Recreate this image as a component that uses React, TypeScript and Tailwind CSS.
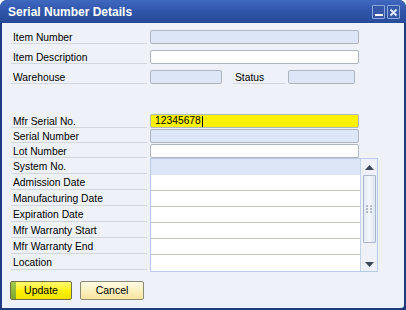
import React from "react";

const font = "font-['Liberation_Sans',Arial,sans-serif]";

function Label({ text, w = "w-[136px]", h = "h-[14px]" }: { text: string; w?: string; h?: string }) {
  return (
    <div className={`${w} ${h} mr-[3px] border-b border-[#d2d7df] pl-[2px] pt-[1px] flex items-center text-[10.3px] leading-[13px] text-black`}>
      {text}
    </div>
  );
}

function Input({ w = "w-[209px]", bg = "bg-[#dde6f6]", children }: { w?: string; bg?: string; children?: React.ReactNode }) {
  return (
    <div className={`${w} h-[14px] border border-[#b0b6c0] rounded-[2px] ${bg} flex items-center pl-[4px] text-[10.3px] leading-[12px] text-black`}>
      {children}
    </div>
  );
}

export default function App() {
  const gridLabels = [
    "System No.",
    "Admission Date",
    "Manufacturing Date",
    "Expiration Date",
    "Mfr Warranty Start",
    "Mfr Warranty End",
    "Location",
  ];
  return (
    <div className={`w-[406px] h-[310px] bg-white ${font}`}>
      <div className="w-[406px] h-[310px] flex flex-col bg-[#1f3c80] rounded-t-[7px] overflow-hidden">
        {/* Title bar */}
        <div className="h-[23px] flex items-center px-[8px] bg-gradient-to-b from-[#3f68c0] via-[#2f56aa] to-[#274a98]">
          <div className="text-white font-bold text-[12px] leading-[16px] mt-[1px] flex-1">Serial Number Details</div>
          <div className="flex gap-[2px] mt-[1px] mr-[-2px]">
            <div className="w-[13px] h-[14px] border border-[#8fa8dc] rounded-[1px] bg-[#3559a8] flex items-end justify-center pb-[2px]">
              <div className="w-[8px] h-[2px] bg-white" />
            </div>
            <div className="w-[13px] h-[14px] border border-[#8fa8dc] rounded-[1px] bg-[#3559a8] flex items-center justify-center">
              <svg width="9" height="9" viewBox="0 0 9 9">
                <path d="M1.5 1.5 L7.5 7.5 M7.5 1.5 L1.5 7.5" stroke="#dfe8ff" strokeWidth="2" />
              </svg>
            </div>
          </div>
        </div>
        {/* Body */}
        <div className="flex-1 ml-[2px] mr-[2px] mb-[2px] bg-[#eef2f8] rounded-br-[3px] pl-[9px] pt-[4px] flex flex-col">
          <div className="h-[20px] flex items-center">
            <Label text="Item Number" />
            <Input />
          </div>
          <div className="h-[20px] flex items-center">
            <Label text="Item Description" />
            <Input bg="bg-white" />
          </div>
          <div className="h-[20px] flex items-center">
            <Label text="Warehouse" />
            <Input w="w-[72px]" />
            <div className="ml-[11px]">
              <Label text="Status" w="w-[52px]" />
            </div>
            <Input w="w-[67px]" />
          </div>
          <div className="h-[27px]" />
          <div className="h-[15px] flex items-start">
            <Label text="Mfr Serial No." />
            <Input bg="bg-[#fff200]">
              <span>12345678</span>
              <span className="w-[1px] h-[11px] bg-black ml-[1px]" />
            </Input>
          </div>
          <div className="h-[15px] flex items-start">
            <Label text="Serial Number" />
            <Input />
          </div>
          <div className="h-[15px] flex items-start">
            <Label text="Lot Number" />
            <Input bg="bg-white" />
          </div>
          <div className="flex mt-[-1px]">
            <div className="flex flex-col">
              {gridLabels.map((l) => (
                <Label key={l} text={l} h="h-[16px]" />
              ))}
            </div>
            <div className="w-[228px] h-[114px] border border-[#b7cae8] flex bg-white">
              <div className="w-[209px] flex flex-col">
                {gridLabels.map((l, i) => (
                  <div
                    key={l}
                    className={`h-[16px] ${i === 0 ? "bg-[#dde6f6]" : "bg-white"} ${i >= 1 && i <= 5 ? "border-b border-[#c6c6be]" : ""}`}
                  />
                ))}
              </div>
              <div className="w-[17px] border-l border-[#c4d3ea] bg-[#eef2f8] flex flex-col items-center">
                <div className="h-[15px] flex items-center justify-center mt-[1px]">
                  <svg width="9" height="5" viewBox="0 0 9 5">
                    <path d="M0 5 L4.5 0 L9 5 Z" fill="#3c4656" />
                  </svg>
                </div>
                <div className="w-[13px] h-[68px] border border-[#a9b6cc] rounded-[1px] bg-gradient-to-r from-[#e4ebf6] via-[#f4f7fc] to-[#dce4f2] flex items-center justify-center">
                  <svg width="6" height="8" viewBox="0 0 6 8">
                    <g fill="#b3bccb">
                      <rect x="0" y="0" width="2" height="2" />
                      <rect x="4" y="0" width="2" height="2" />
                      <rect x="0" y="3" width="2" height="2" />
                      <rect x="4" y="3" width="2" height="2" />
                      <rect x="0" y="6" width="2" height="2" />
                      <rect x="4" y="6" width="2" height="2" />
                    </g>
                  </svg>
                </div>
                <div className="flex-1" />
                <div className="h-[14px] flex items-center justify-center">
                  <svg width="9" height="5" viewBox="0 0 9 5">
                    <path d="M0 0 L9 0 L4.5 5 Z" fill="#3c4656" />
                  </svg>
                </div>
              </div>
            </div>
          </div>
          <div className="flex gap-[8px] mt-[9px] ml-[-1px]">
            <div className="w-[62px] h-[19px] border border-[#6e6c4a] rounded-[2px] bg-gradient-to-b from-[#fff76a] via-[#fff200] to-[#f2e200] flex items-stretch">
              <div className="w-[5px] bg-gradient-to-b from-[#a6c94a] to-[#7fa62c]" />
              <div className="flex-1 flex items-center justify-center text-[10.5px] leading-[13px] text-black pr-[5px]">Update</div>
            </div>
            <div className="w-[64px] h-[19px] border border-[#8e8a72] rounded-[2px] bg-gradient-to-b from-[#fffbe6] via-[#fdf1bf] to-[#f6e4a0] flex items-center justify-center text-[10.5px] leading-[13px] text-black">
              Cancel
            </div>
          </div>
        </div>
      </div>
    </div>
  );
}
